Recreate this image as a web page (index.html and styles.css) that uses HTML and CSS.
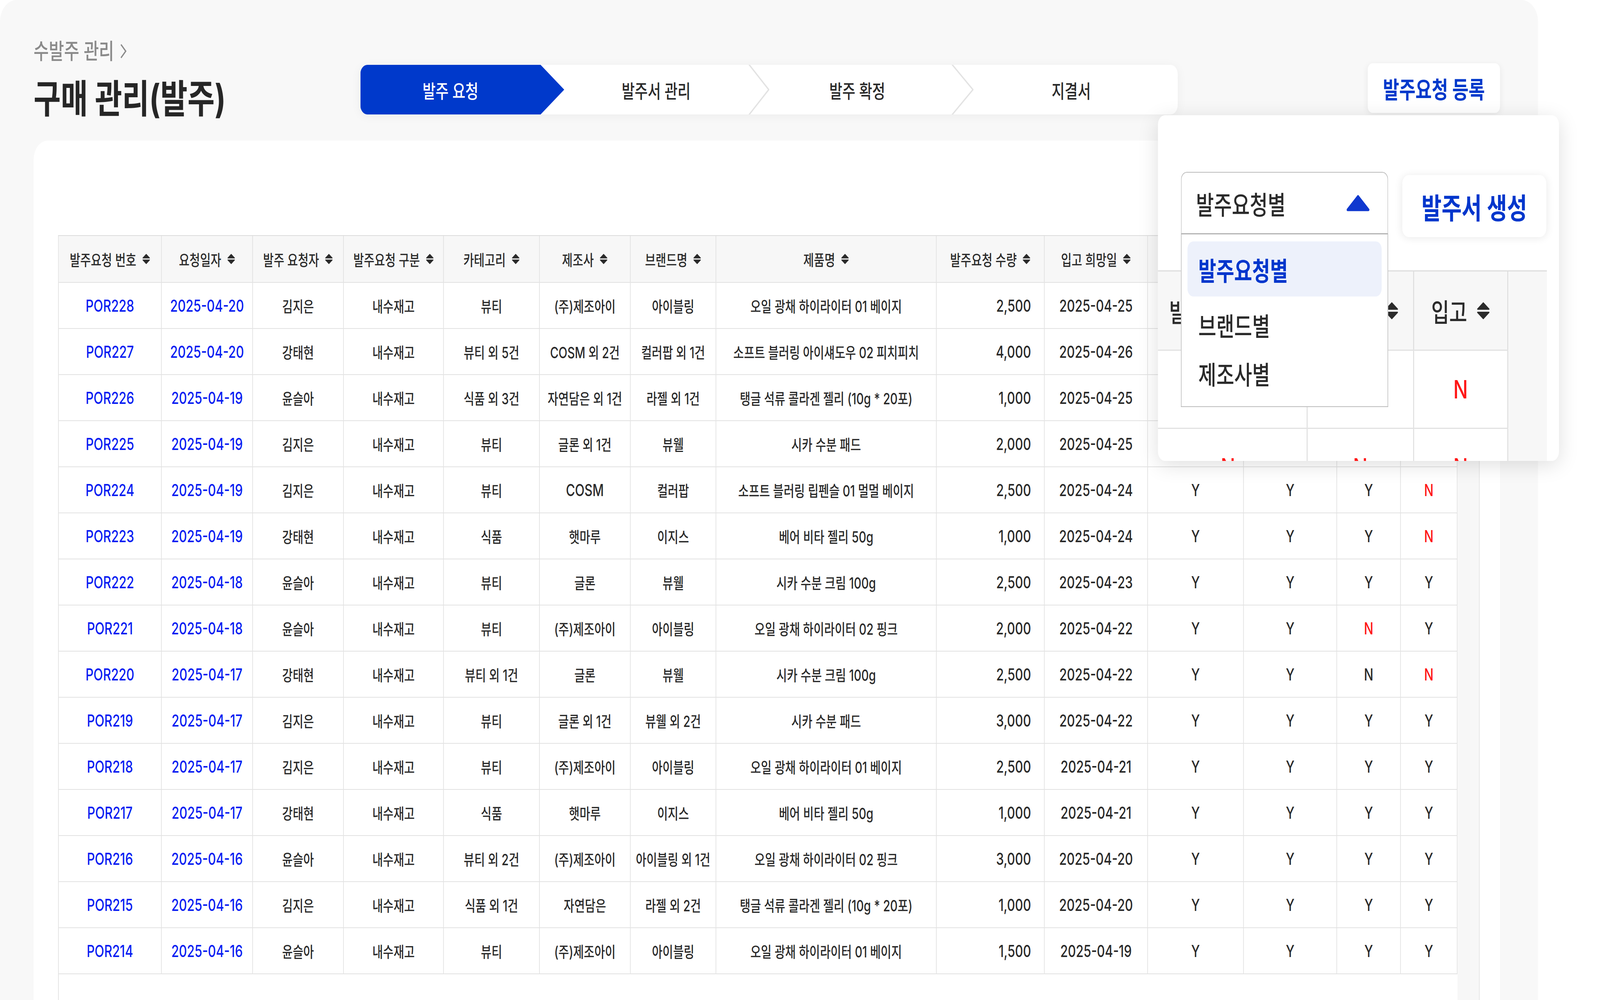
FILE: index.html
```html
<!DOCTYPE html>
<html lang="ko">
<head>
<meta charset="utf-8">
<title>구매 관리(발주)</title>
<link rel="stylesheet" href="styles.css">
</head>
<body>
<div class="page">
<div class="panel">
  <header class="top">
    <div class="heading">
      <div class="crumb"><span>수발주 관리</span><svg class="crumb-chev" viewBox="0 0 29 40"><polyline points="7,3 23,20 7,37" fill="none" stroke="#8a8a8a" stroke-width="4"/></svg></div>
      <h1 class="title">구매 관리(발주)</h1>
    </div>
    <nav class="stepper">
      <div class="step step-active">발주 요청</div>
      <div class="step step-2">발주서 관리</div>
      <svg class="sep" width="72" height="127" viewBox="0 0 72 127"><polyline points="1,-3 70,63.5 1,130" fill="none" stroke="#e3e3e3" stroke-width="4"/></svg>
      <div class="step step-3">발주 확정</div>
      <svg class="sep" width="76" height="127" viewBox="0 0 76 127"><polyline points="1,-3 74,63.5 1,130" fill="none" stroke="#e3e3e3" stroke-width="4"/></svg>
      <div class="step step-4">지결서</div>
    </nav>
    <button class="btn-register">발주요청 등록</button>
  </header>

  <section class="card">
    <div class="table-wrap">
      <table class="grid">
        <colgroup>
          <col style="width:348px"><col style="width:309px"><col style="width:308px"><col style="width:339px"><col style="width:325px"><col style="width:308px"><col style="width:290px"><col style="width:747px"><col style="width:366px"><col style="width:350px"><col style="width:325px"><col style="width:316px"><col style="width:216px"><col style="width:192px">
        </colgroup>
        <thead>
          <tr>
            <th><span class="th-in"><span>발주요청 번호</span><svg class="sort" viewBox="0 0 27 28"><path d="M13.5 2 L25 11.5 H2 Z M2 16.5 H25 L13.5 26 Z" fill="#2b2b2b" stroke="#2b2b2b" stroke-width="2" stroke-linejoin="round"/></svg></span></th>
            <th><span class="th-in"><span>요청일자</span><svg class="sort" viewBox="0 0 27 28"><path d="M13.5 2 L25 11.5 H2 Z M2 16.5 H25 L13.5 26 Z" fill="#2b2b2b" stroke="#2b2b2b" stroke-width="2" stroke-linejoin="round"/></svg></span></th>
            <th><span class="th-in"><span>발주 요청자</span><svg class="sort" viewBox="0 0 27 28"><path d="M13.5 2 L25 11.5 H2 Z M2 16.5 H25 L13.5 26 Z" fill="#2b2b2b" stroke="#2b2b2b" stroke-width="2" stroke-linejoin="round"/></svg></span></th>
            <th><span class="th-in"><span>발주요청 구분</span><svg class="sort" viewBox="0 0 27 28"><path d="M13.5 2 L25 11.5 H2 Z M2 16.5 H25 L13.5 26 Z" fill="#2b2b2b" stroke="#2b2b2b" stroke-width="2" stroke-linejoin="round"/></svg></span></th>
            <th><span class="th-in"><span>카테고리</span><svg class="sort" viewBox="0 0 27 28"><path d="M13.5 2 L25 11.5 H2 Z M2 16.5 H25 L13.5 26 Z" fill="#2b2b2b" stroke="#2b2b2b" stroke-width="2" stroke-linejoin="round"/></svg></span></th>
            <th><span class="th-in"><span>제조사</span><svg class="sort" viewBox="0 0 27 28"><path d="M13.5 2 L25 11.5 H2 Z M2 16.5 H25 L13.5 26 Z" fill="#2b2b2b" stroke="#2b2b2b" stroke-width="2" stroke-linejoin="round"/></svg></span></th>
            <th><span class="th-in"><span>브랜드명</span><svg class="sort" viewBox="0 0 27 28"><path d="M13.5 2 L25 11.5 H2 Z M2 16.5 H25 L13.5 26 Z" fill="#2b2b2b" stroke="#2b2b2b" stroke-width="2" stroke-linejoin="round"/></svg></span></th>
            <th><span class="th-in"><span>제품명</span><svg class="sort" viewBox="0 0 27 28"><path d="M13.5 2 L25 11.5 H2 Z M2 16.5 H25 L13.5 26 Z" fill="#2b2b2b" stroke="#2b2b2b" stroke-width="2" stroke-linejoin="round"/></svg></span></th>
            <th><span class="th-in"><span>발주요청 수량</span><svg class="sort" viewBox="0 0 27 28"><path d="M13.5 2 L25 11.5 H2 Z M2 16.5 H25 L13.5 26 Z" fill="#2b2b2b" stroke="#2b2b2b" stroke-width="2" stroke-linejoin="round"/></svg></span></th>
            <th><span class="th-in"><span>입고 희망일</span><svg class="sort" viewBox="0 0 27 28"><path d="M13.5 2 L25 11.5 H2 Z M2 16.5 H25 L13.5 26 Z" fill="#2b2b2b" stroke="#2b2b2b" stroke-width="2" stroke-linejoin="round"/></svg></span></th>
            <th><span class="th-in"><span>발주 확정</span><svg class="sort" viewBox="0 0 27 28"><path d="M13.5 2 L25 11.5 H2 Z M2 16.5 H25 L13.5 26 Z" fill="#2b2b2b" stroke="#2b2b2b" stroke-width="2" stroke-linejoin="round"/></svg></span></th>
            <th><span class="th-in"><span>발주서 생성</span><svg class="sort" viewBox="0 0 27 28"><path d="M13.5 2 L25 11.5 H2 Z M2 16.5 H25 L13.5 26 Z" fill="#2b2b2b" stroke="#2b2b2b" stroke-width="2" stroke-linejoin="round"/></svg></span></th>
            <th><span class="th-in"><span>지결서</span><svg class="sort" viewBox="0 0 27 28"><path d="M13.5 2 L25 11.5 H2 Z M2 16.5 H25 L13.5 26 Z" fill="#2b2b2b" stroke="#2b2b2b" stroke-width="2" stroke-linejoin="round"/></svg></span></th>
            <th><span class="th-in"><span>입고</span><svg class="sort" viewBox="0 0 27 28"><path d="M13.5 2 L25 11.5 H2 Z M2 16.5 H25 L13.5 26 Z" fill="#2b2b2b" stroke="#2b2b2b" stroke-width="2" stroke-linejoin="round"/></svg></span></th>
          </tr>
        </thead>
        <tbody>
          <tr><td class="link">POR228</td><td class="link">2025-04-20</td><td class="k">김지은</td><td class="k">내수재고</td><td class="k">뷰티</td><td class="k">(주)제조아이</td><td class="k">아이블링</td><td class="k">오일 광채 하이라이터 01 베이지</td><td class="num">2,500</td><td>2025-04-25</td><td>Y</td><td>Y</td><td>Y</td><td class="n">N</td></tr>
          <tr><td class="link">POR227</td><td class="link">2025-04-20</td><td class="k">강태현</td><td class="k">내수재고</td><td class="k">뷰티 외 5건</td><td class="k">COSM 외 2건</td><td class="k">컬러팝 외 1건</td><td class="k">소프트 블러링 아이섀도우 02 피치피치</td><td class="num">4,000</td><td>2025-04-26</td><td>Y</td><td class="n">N</td><td class="n">N</td><td class="n">N</td></tr>
          <tr><td class="link">POR226</td><td class="link">2025-04-19</td><td class="k">윤슬아</td><td class="k">내수재고</td><td class="k">식품 외 3건</td><td class="k">자연담은 외 1건</td><td class="k">라젤 외 1건</td><td class="k">탱글 석류 콜라겐 젤리 (10g * 20포)</td><td class="num">1,000</td><td>2025-04-25</td><td>Y</td><td>Y</td><td>Y</td><td>Y</td></tr>
          <tr><td class="link">POR225</td><td class="link">2025-04-19</td><td class="k">김지은</td><td class="k">내수재고</td><td class="k">뷰티</td><td class="k">글론 외 1건</td><td class="k">뷰웰</td><td class="k">시카 수분 패드</td><td class="num">2,000</td><td>2025-04-25</td><td>Y</td><td>Y</td><td>Y</td><td>Y</td></tr>
          <tr><td class="link">POR224</td><td class="link">2025-04-19</td><td class="k">김지은</td><td class="k">내수재고</td><td class="k">뷰티</td><td>COSM</td><td class="k">컬러팝</td><td class="k">소프트 블러링 립펜슬 01 멀멀 베이지</td><td class="num">2,500</td><td>2025-04-24</td><td>Y</td><td>Y</td><td>Y</td><td class="n">N</td></tr>
          <tr><td class="link">POR223</td><td class="link">2025-04-19</td><td class="k">강태현</td><td class="k">내수재고</td><td class="k">식품</td><td class="k">햇마루</td><td class="k">이지스</td><td class="k">베어 비타 젤리 50g</td><td class="num">1,000</td><td>2025-04-24</td><td>Y</td><td>Y</td><td>Y</td><td class="n">N</td></tr>
          <tr><td class="link">POR222</td><td class="link">2025-04-18</td><td class="k">윤슬아</td><td class="k">내수재고</td><td class="k">뷰티</td><td class="k">글론</td><td class="k">뷰웰</td><td class="k">시카 수분 크림 100g</td><td class="num">2,500</td><td>2025-04-23</td><td>Y</td><td>Y</td><td>Y</td><td>Y</td></tr>
          <tr><td class="link">POR221</td><td class="link">2025-04-18</td><td class="k">윤슬아</td><td class="k">내수재고</td><td class="k">뷰티</td><td class="k">(주)제조아이</td><td class="k">아이블링</td><td class="k">오일 광채 하이라이터 02 핑크</td><td class="num">2,000</td><td>2025-04-22</td><td>Y</td><td>Y</td><td class="n">N</td><td>Y</td></tr>
          <tr><td class="link">POR220</td><td class="link">2025-04-17</td><td class="k">강태현</td><td class="k">내수재고</td><td class="k">뷰티 외 1건</td><td class="k">글론</td><td class="k">뷰웰</td><td class="k">시카 수분 크림 100g</td><td class="num">2,500</td><td>2025-04-22</td><td>Y</td><td>Y</td><td>N</td><td class="n">N</td></tr>
          <tr><td class="link">POR219</td><td class="link">2025-04-17</td><td class="k">김지은</td><td class="k">내수재고</td><td class="k">뷰티</td><td class="k">글론 외 1건</td><td class="k">뷰웰 외 2건</td><td class="k">시카 수분 패드</td><td class="num">3,000</td><td>2025-04-22</td><td>Y</td><td>Y</td><td>Y</td><td>Y</td></tr>
          <tr><td class="link">POR218</td><td class="link">2025-04-17</td><td class="k">김지은</td><td class="k">내수재고</td><td class="k">뷰티</td><td class="k">(주)제조아이</td><td class="k">아이블링</td><td class="k">오일 광채 하이라이터 01 베이지</td><td class="num">2,500</td><td>2025-04-21</td><td>Y</td><td>Y</td><td>Y</td><td>Y</td></tr>
          <tr><td class="link">POR217</td><td class="link">2025-04-17</td><td class="k">강태현</td><td class="k">내수재고</td><td class="k">식품</td><td class="k">햇마루</td><td class="k">이지스</td><td class="k">베어 비타 젤리 50g</td><td class="num">1,000</td><td>2025-04-21</td><td>Y</td><td>Y</td><td>Y</td><td>Y</td></tr>
          <tr><td class="link">POR216</td><td class="link">2025-04-16</td><td class="k">윤슬아</td><td class="k">내수재고</td><td class="k">뷰티 외 2건</td><td class="k">(주)제조아이</td><td class="k">아이블링 외 1건</td><td class="k">오일 광채 하이라이터 02 핑크</td><td class="num">3,000</td><td>2025-04-20</td><td>Y</td><td>Y</td><td>Y</td><td>Y</td></tr>
          <tr><td class="link">POR215</td><td class="link">2025-04-16</td><td class="k">김지은</td><td class="k">내수재고</td><td class="k">식품 외 1건</td><td class="k">자연담은</td><td class="k">라젤 외 2건</td><td class="k">탱글 석류 콜라겐 젤리 (10g * 20포)</td><td class="num">1,000</td><td>2025-04-20</td><td>Y</td><td>Y</td><td>Y</td><td>Y</td></tr>
          <tr><td class="link">POR214</td><td class="link">2025-04-16</td><td class="k">윤슬아</td><td class="k">내수재고</td><td class="k">뷰티</td><td class="k">(주)제조아이</td><td class="k">아이블링</td><td class="k">오일 광채 하이라이터 01 베이지</td><td class="num">1,500</td><td>2025-04-19</td><td>Y</td><td>Y</td><td>Y</td><td>Y</td></tr>
        </tbody>
      </table>
      <div class="scroll-track"></div>
    </div>
  </section>

  <div class="popup">
    <div class="popup-controls">
      <div class="select">
        <div class="select-head"><span>발주요청별</span><svg class="caret" viewBox="0 0 78 42"><polygon points="39,4 74,38 4,38" fill="#0f38cf" stroke="#0f38cf" stroke-width="7" stroke-linejoin="round"/></svg></div>
        <div class="select-list">
          <div class="opt opt-on">발주요청별</div>
          <div class="opt">브랜드별</div>
          <div class="opt">제조사별</div>
        </div>
      </div>
      <button class="btn-create">발주서 생성</button>
    </div>
    <div class="mag">
      <table class="mag-table">
        <colgroup><col style="width:534px"><col style="width:361px"><col style="width:319px"></colgroup>
        <thead>
          <tr>
            <th><span class="th-in th-big"><span>발주서 생성</span><svg class="sort-big" viewBox="0 0 27 28"><path d="M13.5 2 L25 11.5 H2 Z M2 16.5 H25 L13.5 26 Z" fill="#2b2b2b" stroke="#2b2b2b" stroke-width="2" stroke-linejoin="round"/></svg></span></th>
            <th><span class="th-in th-big"><span>지결서</span><svg class="sort-big" viewBox="0 0 27 28"><path d="M13.5 2 L25 11.5 H2 Z M2 16.5 H25 L13.5 26 Z" fill="#2b2b2b" stroke="#2b2b2b" stroke-width="2" stroke-linejoin="round"/></svg></span></th>
            <th><span class="th-in th-big"><span>입고</span><svg class="sort-big" viewBox="0 0 27 28"><path d="M13.5 2 L25 11.5 H2 Z M2 16.5 H25 L13.5 26 Z" fill="#2b2b2b" stroke="#2b2b2b" stroke-width="2" stroke-linejoin="round"/></svg></span></th>
          </tr>
        </thead>
        <tbody>
          <tr><td>Y</td><td>Y</td><td class="n">N</td></tr>
          <tr><td class="n">N</td><td class="n">N</td><td class="n">N</td></tr>
        </tbody>
      </table>
      <div class="mag-track"></div>
    </div>
  </div>
</div>
</div>
</body>
</html>
```

FILE: styles.css
```css
html, body {
  margin: 0;
  padding: 0;
  overflow: hidden;
}

body {
  height: 2560px;
  background: #ffffff;
  font-family: Inter, "Noto Sans CJK KR", sans-serif;
  color: #2a2a2a;
}

/* the design is drawn on a 5422 x 2560 canvas and fitted to the window width */
.page {
  width: 5422px;
  height: 2560px;
  overflow: hidden;
  background: #ffffff;
  transform-origin: 0 0;
  transform: scaleX(tan(atan2(100vw, 5422px)));
}

.panel {
  position: relative;
  width: 5212px;
  height: 2560px;
  box-sizing: border-box;
  padding: 0 129px 0 114px;
  background: #f8f8f8;
  border-radius: 56px 56px 0 0;
}

/* ---------- header ---------- */
.top {
  display: flex;
  align-items: flex-start;
  height: 207px;
  padding-top: 101px;
}

.heading {
  flex: none;
  width: 1107px;
}

.crumb {
  display: flex;
  align-items: center;
  gap: 16px;
  height: 60px;
  font-size: 56px;
  line-height: 60px;
  font-weight: 500;
  color: #8a8a8a;
  white-space: nowrap;
}

.crumb-chev {
  width: 29px;
  height: 40px;
  flex: none;
}

.title {
  margin: 37px 0 0;
  height: 110px;
  font-size: 100px;
  line-height: 110px;
  font-weight: 700;
  color: #262626;
  white-space: nowrap;
}

.stepper {
  flex: none;
  display: flex;
  width: 2770px;
  height: 127px;
  margin-top: 65px;
  background: #ffffff;
  border-radius: 24px;
  overflow: hidden;
  box-shadow: 0 4px 30px rgba(0, 0, 0, 0.05);
}

.step {
  flex: none;
  box-sizing: border-box;
  display: flex;
  align-items: center;
  justify-content: center;
  font-size: 48px;
  font-weight: 500;
  color: #2a2a2a;
  white-space: nowrap;
}

.step-active {
  width: 691px;
  padding-right: 80px;
  background: #0039cb;
  color: #ffffff;
  clip-path: polygon(0 0, 611px 0, 100% 50%, 611px 100%, 0 100%);
}

.step-2 { width: 623px; }
.step-3 { width: 616px; padding-right: 20px; }
.step-4 { width: 692px; padding-right: 30px; }

.sep {
  flex: none;
  display: block;
}

.btn-register {
  flex: none;
  margin: 61px 0 0 auto;
  width: 448px;
  height: 127px;
  padding: 0;
  border: none;
  border-radius: 16px;
  background: #ffffff;
  box-shadow: 0 4px 20px rgba(0, 0, 0, 0.07);
  font-family: inherit;
  font-size: 60px;
  font-weight: 700;
  color: #0039cb;
}

/* ---------- card + table ---------- */
.card {
  margin-top: 52px;
  height: 2200px;
  box-sizing: border-box;
  padding: 242px 69px 0 83px;
  background: #ffffff;
  border-radius: 48px 48px 0 0;
}

.table-wrap {
  display: flex;
  align-items: flex-start;
  height: 1958px;
  border: 2px solid #dcdcdc;
  border-bottom: none;
}

.grid {
  flex: none;
  width: 4739px;
  table-layout: fixed;
  border-collapse: collapse;
}

.grid th,
.grid td {
  padding: 0;
  text-align: center;
  white-space: nowrap;
  overflow: hidden;
  border-right: 2px solid #dedede;
  border-bottom: 2px solid #e2e2e2;
}

.grid thead tr { height: 119px; }

.grid th {
  background: #f7f7f7;
  font-size: 39px;
  font-weight: 500;
  color: #2b2b2b;
}

.th-in {
  display: inline-flex;
  align-items: center;
  gap: 20px;
  vertical-align: middle;
}

.sort {
  flex: none;
  width: 27px;
  height: 28px;
}

.grid tbody tr { height: 118px; }

.grid td {
  font-size: 42px;
  font-weight: 500;
  color: #2a2a2a;
}

.grid td.k { font-size: 39px; }

.grid td.link { color: #0a1ef2; }

.grid td.num {
  text-align: right;
  padding-right: 44px;
}

.grid td.n,
.mag-table td.n { color: #ff1616; }

.scroll-track {
  flex: 1;
  align-self: stretch;
  background: #f7f7f7;
}

/* ---------- popup ---------- */
.popup {
  position: absolute;
  left: 3924px;
  top: 295px;
  width: 1359px;
  height: 885px;
  overflow: hidden;
  background: #ffffff;
  border-radius: 24px;
  box-shadow: 0 10px 60px rgba(0, 0, 0, 0.13);
}

.popup-controls {
  display: flex;
  align-items: flex-start;
  gap: 48px;
  padding: 145px 0 0 78px;
}

.select {
  position: relative;
  z-index: 2;
  flex: none;
  width: 702px;
}

.select-head {
  box-sizing: border-box;
  height: 160px;
  display: flex;
  align-items: center;
  justify-content: space-between;
  padding: 0 61px 0 49px;
  border: 2px solid #bcbcbc;
  border-bottom: 3px solid #b2b2b2;
  border-radius: 20px 20px 0 0;
  background: #ffffff;
  font-size: 66px;
  font-weight: 500;
  color: #2a2a2a;
}

.caret {
  flex: none;
  width: 78px;
  height: 42px;
}

.select-list {
  position: absolute;
  left: 0;
  top: 160px;
  width: 702px;
  box-sizing: border-box;
  padding: 18px 20px 23px;
  border: 2px solid #bcbcbc;
  border-top: none;
  background: #ffffff;
}

.opt {
  height: 124px;
  display: flex;
  align-items: center;
  padding-left: 37px;
  font-size: 66px;
  font-weight: 500;
  color: #2a2a2a;
}

.opt-on {
  height: 141px;
  margin-bottom: 10px;
  border-radius: 20px;
  background: #edf1fb;
  color: #0036cc;
  font-weight: 600;
}

.btn-create {
  flex: none;
  margin-top: 8px;
  width: 488px;
  height: 159px;
  padding: 0;
  border: none;
  border-radius: 22px;
  background: #ffffff;
  box-shadow: 0 2px 24px rgba(0, 0, 0, 0.09);
  font-family: inherit;
  font-size: 74px;
  font-weight: 700;
  color: #0036cc;
}

.mag {
  display: flex;
  align-items: flex-start;
  width: 1347px;
  height: 600px;
  margin: 85px 0 0 -29px;
}

.mag-table {
  flex: none;
  width: 1214px;
  table-layout: fixed;
  border-collapse: collapse;
  border-top: 3px solid #dedede;
}

.mag-table th,
.mag-table td {
  padding: 0;
  text-align: center;
  white-space: nowrap;
  overflow: hidden;
  border-right: 3px solid #dcdcdc;
  border-bottom: 3px solid #e2e2e2;
}

.mag-table thead tr { height: 203px; }

.mag-table th {
  background: #f7f7f7;
  font-size: 66px;
  font-weight: 500;
  color: #2b2b2b;
}

.th-big { gap: 32px; }

.sort-big {
  flex: none;
  width: 45px;
  height: 47px;
}

.mag-table tbody tr { height: 200px; }

.mag-table td {
  font-size: 65px;
  font-weight: 500;
  color: #2a2a2a;
}

.mag-track {
  flex: 1;
  align-self: stretch;
  background: #f7f7f7;
  border-top: 3px solid #dedede;
}
```
